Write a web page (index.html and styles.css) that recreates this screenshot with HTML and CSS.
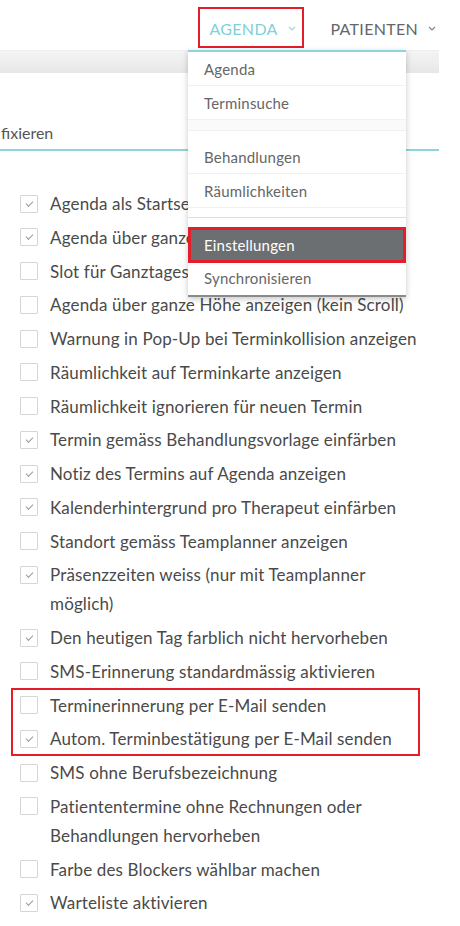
FILE: index.html
```html
<!DOCTYPE html>
<html lang="de">
<head>
<meta charset="utf-8">
<link rel="stylesheet" href="styles.css">
</head>
<body>
<div class="page">
  <header class="topbar">
    <nav class="nav">
      <div class="nav-item active marked">AGENDA <span class="chev"><svg width="8" height="5" viewBox="0 0 8 5"><path d="M1 1l3 3 3-3" fill="none" stroke="currentColor" stroke-width="1.2"/></svg></span></div>
      <div class="nav-item last">PATIENTEN <span class="chev"><svg width="8" height="5" viewBox="0 0 8 5"><path d="M1 1l3 3 3-3" fill="none" stroke="currentColor" stroke-width="1.2"/></svg></span></div>
    </nav>
  </header>
  <div class="strip"></div>
  <div class="tabs"><span class="tab">fixieren</span></div>

  <ul class="options">
    <li class="opt"><span class="box checked"></span><span class="lbl">Agenda als Startseite</span></li>
    <li class="opt"><span class="box checked"></span><span class="lbl">Agenda über ganze Woche anzeigen</span></li>
    <li class="opt"><span class="box"></span><span class="lbl">Slot für Ganztagestermine anzeigen</span></li>
    <li class="opt"><span class="box"></span><span class="lbl">Agenda über ganze Höhe anzeigen (kein Scroll)</span></li>
    <li class="opt"><span class="box"></span><span class="lbl">Warnung in Pop-Up bei Terminkollision anzeigen</span></li>
    <li class="opt"><span class="box"></span><span class="lbl">Räumlichkeit auf Terminkarte anzeigen</span></li>
    <li class="opt"><span class="box"></span><span class="lbl">Räumlichkeit ignorieren für neuen Termin</span></li>
    <li class="opt"><span class="box checked"></span><span class="lbl">Termin gemäss Behandlungsvorlage einfärben</span></li>
    <li class="opt"><span class="box checked"></span><span class="lbl">Notiz des Termins auf Agenda anzeigen</span></li>
    <li class="opt"><span class="box checked"></span><span class="lbl">Kalenderhintergrund pro Therapeut einfärben</span></li>
    <li class="opt"><span class="box"></span><span class="lbl">Standort gemäss Teamplanner anzeigen</span></li>
    <li class="opt"><span class="box checked"></span><span class="lbl">Präsenzzeiten weiss (nur mit Teamplanner möglich)</span></li>
    <li class="opt"><span class="box checked"></span><span class="lbl">Den heutigen Tag farblich nicht hervorheben</span></li>
    <li class="opt"><span class="box"></span><span class="lbl">SMS-Erinnerung standardmässig aktivieren</span></li>
    <li class="group-mark">
      <ul class="inner">
        <li class="opt"><span class="box"></span><span class="lbl">Terminerinnerung per E-Mail senden</span></li>
        <li class="opt"><span class="box checked"></span><span class="lbl">Autom. Terminbestätigung per E-Mail senden</span></li>
      </ul>
    </li>
    <li class="opt"><span class="box"></span><span class="lbl">SMS ohne Berufsbezeichnung</span></li>
    <li class="opt"><span class="box"></span><span class="lbl">Patiententermine ohne Rechnungen oder Behandlungen hervorheben</span></li>
    <li class="opt"><span class="box"></span><span class="lbl">Farbe des Blockers wählbar machen</span></li>
    <li class="opt"><span class="box checked"></span><span class="lbl">Warteliste aktivieren</span></li>
  </ul>

  <div class="dropdown">
    <div class="dd-item">Agenda</div>
    <div class="dd-item">Terminsuche</div>
    <div class="dd-sep"></div>
    <div class="dd-item first">Behandlungen</div>
    <div class="dd-item">Räumlichkeiten</div>
    <div class="dd-sep two"></div>
    <div class="dd-item selected">Einstellungen</div>
    <div class="dd-item last">Synchronisieren</div>
  </div>
</div>
</body>
</html>
```
FILE: styles.css
```css
* { box-sizing: border-box; }
html, body { margin: 0; padding: 0; background: #fff; }
body {
  font-family: Lato, "Noto Sans", sans-serif;
  color: #4d4d4d;
  width: 460px;
  height: 926px;
  overflow: hidden;
}
.page { position: relative; width: 460px; }

.topbar { height: 50px; width: 439px; display: flex; justify-content: flex-end; align-items: flex-end; }
.nav { display: flex; align-items: center; height: 41px; margin-bottom: 2px; }
.nav-item {
  display: flex; align-items: center;
  font-size: 16px; letter-spacing: 0.3px;
  color: #666;
  height: 41px;
  padding: 2px 0 0 12px;
}
.nav-item.last { padding-right: 3px; }
.nav-item.active { color: #7fd0da; margin-right: 15px; }
.nav-item.marked { border: 2px solid #e31e2a; width: 106px; padding-left: 10px; }
.chev { margin-left: 10px; display: flex; color: inherit; opacity: 0.8; }

.strip {
  width: 439px; height: 23px;
  background: linear-gradient(#f4f4f4, #e7e7e7);
  border-top: 1px solid #efefef;
}
.tabs {
  width: 439px; height: 78px;
  border-bottom: 2px solid #8dd4dd;
  display: flex; align-items: flex-end;
  padding-left: 1px; padding-bottom: 6px;
}
.tab { font-size: 16px; color: #555; line-height: 20px; }

.options {
  list-style: none; margin: 0; padding: 38.2px 0 0 0;
  width: 439px;
  display: flex; flex-direction: column; gap: 4.75px;
}
.inner { list-style: none; margin: 0; padding: 0; display: flex; flex-direction: column; gap: 4.75px; }
.group-mark {
  margin: -3px 19px -3px 11px;
  border: 2px solid #e31e2a;
  padding: 1px 0;
}
.group-mark .opt { padding-left: 7px; }
.opt {
  display: flex; align-items: flex-start; gap: 12px;
  padding-left: 20px; padding-right: 14px;
  font-size: 17px; line-height: 29px; color: #4a4a4a;
  letter-spacing: 0.15px;
}
.box {
  flex: none; width: 18px; height: 18px; margin-top: 5.5px;
  border: 1px solid #d6d6d6; border-radius: 1px; background: #fff;
  position: relative;
}
.box.checked::after {
  content: ""; position: absolute; left: 5px; top: 5px;
  width: 6px; height: 3px;
  border-left: 1.6px solid #9a9a9a; border-bottom: 1.6px solid #9a9a9a;
  transform: rotate(-45deg);
}

.dropdown {
  position: absolute; left: 188px; top: 50px; width: 218px;
  background: #fff;
  border-top: 2px solid #8dd4dd;
  box-shadow: 0 2px 6px rgba(0,0,0,0.22);
  border-bottom: 2px solid #8a8a8a;
  font-size: 15px; letter-spacing: 0.2px; color: #666;
}
.dd-item {
  height: 34px; display: flex; align-items: center;
  padding-left: 16px;
  border-bottom: 1px solid #f1f1f1;
}
.dd-item.first { height: 43px; padding-top: 10px; }
.dd-item.last { border-bottom: none; height: 32px; padding-bottom: 3px; }
.dd-sep { height: 11px; background: #fafafa; border-bottom: 1px solid #f0f0f0; }
.dd-sep.two { height: 10px; background: #fff; border-bottom: 1px solid #ddd; }
.dd-item.selected {
  background: #6b6f72; color: #fff;
  border: 3px solid #e31e2a;
  height: 36px;
  margin-top: 9px;
  padding-left: 13px;
}
```
